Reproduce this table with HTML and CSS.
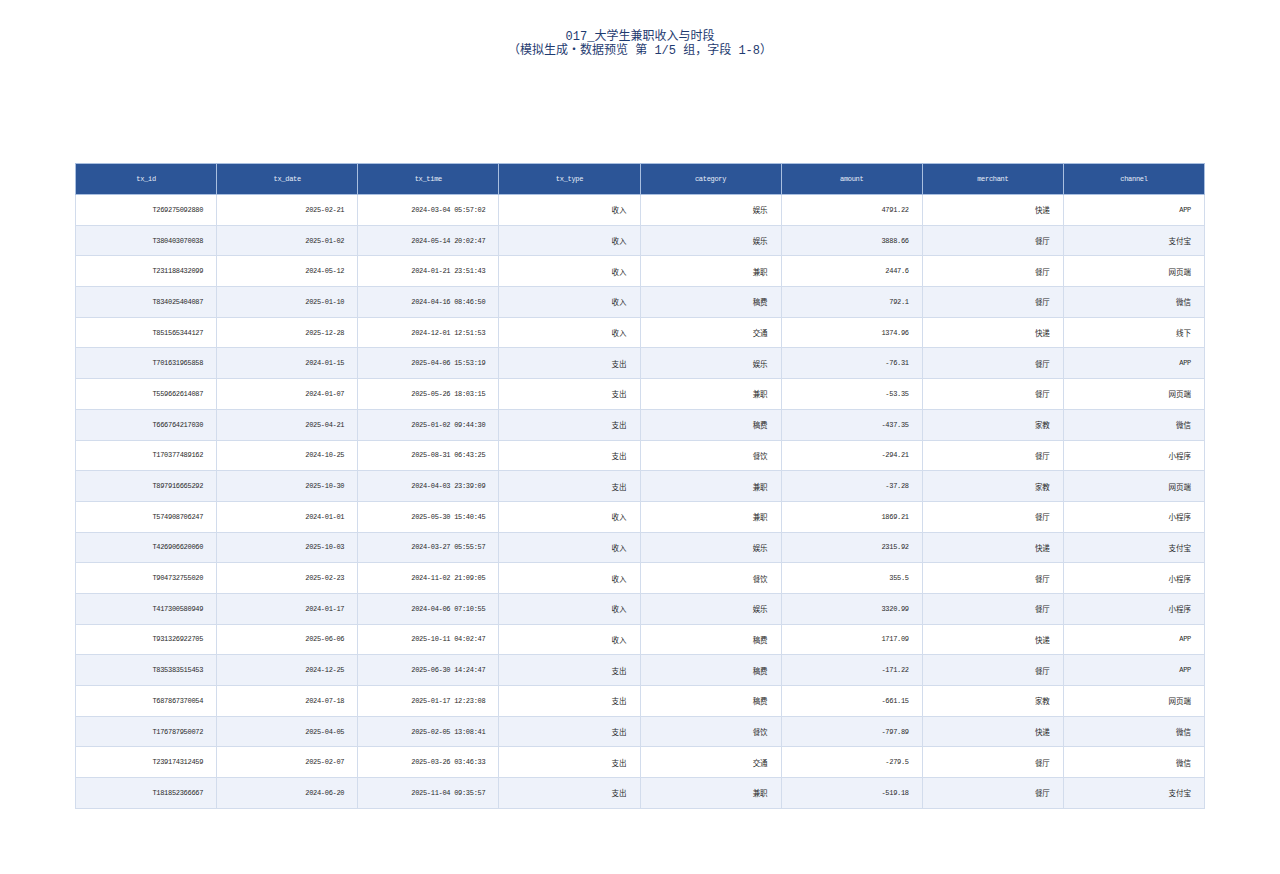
FILE: index.html
```html
<!DOCTYPE html>
<html lang="zh">
<head>
<meta charset="utf-8">
<title>017_大学生兼职收入与时段</title>
<link rel="stylesheet" href="styles.css">
</head>
<body>
<div class="page">
  <header class="title">
    <div>017_大学生兼职收入与时段</div>
    <div>（模拟生成・数据预览 第 1/5 组，字段 1-8）</div>
  </header>
  <table class="grid">
    <thead>
      <tr><th>tx_id</th><th>tx_date</th><th>tx_time</th><th>tx_type</th><th>category</th><th>amount</th><th>merchant</th><th>channel</th></tr>
    </thead>
    <tbody>
      <tr><td>T269275092880</td><td>2025-02-21</td><td>2024-03-04 05:57:02</td><td class="zh">收入</td><td class="zh">娱乐</td><td>4791.22</td><td class="zh">快递</td><td>APP</td></tr>
      <tr><td>T380403070038</td><td>2025-01-02</td><td>2024-05-14 20:02:47</td><td class="zh">收入</td><td class="zh">娱乐</td><td>3888.66</td><td class="zh">餐厅</td><td class="zh">支付宝</td></tr>
      <tr><td>T231188432099</td><td>2024-05-12</td><td>2024-01-21 23:51:43</td><td class="zh">收入</td><td class="zh">兼职</td><td>2447.6</td><td class="zh">餐厅</td><td class="zh">网页端</td></tr>
      <tr><td>T834025404087</td><td>2025-01-10</td><td>2024-04-16 08:46:50</td><td class="zh">收入</td><td class="zh">稿费</td><td>792.1</td><td class="zh">餐厅</td><td class="zh">微信</td></tr>
      <tr><td>T851565344127</td><td>2025-12-28</td><td>2024-12-01 12:51:53</td><td class="zh">收入</td><td class="zh">交通</td><td>1374.96</td><td class="zh">快递</td><td class="zh">线下</td></tr>
      <tr><td>T701631965858</td><td>2024-01-15</td><td>2025-04-06 15:53:19</td><td class="zh">支出</td><td class="zh">娱乐</td><td>-76.31</td><td class="zh">餐厅</td><td>APP</td></tr>
      <tr><td>T559662614087</td><td>2024-01-07</td><td>2025-05-26 18:03:15</td><td class="zh">支出</td><td class="zh">兼职</td><td>-53.35</td><td class="zh">餐厅</td><td class="zh">网页端</td></tr>
      <tr><td>T666764217030</td><td>2025-04-21</td><td>2025-01-02 09:44:30</td><td class="zh">支出</td><td class="zh">稿费</td><td>-437.35</td><td class="zh">家教</td><td class="zh">微信</td></tr>
      <tr><td>T170377489162</td><td>2024-10-25</td><td>2025-08-31 06:43:25</td><td class="zh">支出</td><td class="zh">餐饮</td><td>-294.21</td><td class="zh">餐厅</td><td class="zh">小程序</td></tr>
      <tr><td>T897916665292</td><td>2025-10-30</td><td>2024-04-03 23:39:09</td><td class="zh">支出</td><td class="zh">兼职</td><td>-37.28</td><td class="zh">家教</td><td class="zh">网页端</td></tr>
      <tr><td>T574908706247</td><td>2024-01-01</td><td>2025-05-30 15:40:45</td><td class="zh">收入</td><td class="zh">兼职</td><td>1869.21</td><td class="zh">餐厅</td><td class="zh">小程序</td></tr>
      <tr><td>T426906620060</td><td>2025-10-03</td><td>2024-03-27 05:55:57</td><td class="zh">收入</td><td class="zh">娱乐</td><td>2315.92</td><td class="zh">快递</td><td class="zh">支付宝</td></tr>
      <tr><td>T904732755020</td><td>2025-02-23</td><td>2024-11-02 21:09:05</td><td class="zh">收入</td><td class="zh">餐饮</td><td>355.5</td><td class="zh">餐厅</td><td class="zh">小程序</td></tr>
      <tr><td>T417300580949</td><td>2024-01-17</td><td>2024-04-06 07:10:55</td><td class="zh">收入</td><td class="zh">娱乐</td><td>3320.99</td><td class="zh">餐厅</td><td class="zh">小程序</td></tr>
      <tr><td>T931326922705</td><td>2025-06-06</td><td>2025-10-11 04:02:47</td><td class="zh">收入</td><td class="zh">稿费</td><td>1717.09</td><td class="zh">快递</td><td>APP</td></tr>
      <tr><td>T835383515453</td><td>2024-12-25</td><td>2025-06-30 14:24:47</td><td class="zh">支出</td><td class="zh">稿费</td><td>-171.22</td><td class="zh">餐厅</td><td>APP</td></tr>
      <tr><td>T687867370054</td><td>2024-07-18</td><td>2025-01-17 12:23:08</td><td class="zh">支出</td><td class="zh">稿费</td><td>-661.15</td><td class="zh">家教</td><td class="zh">网页端</td></tr>
      <tr><td>T176787950072</td><td>2025-04-05</td><td>2025-02-05 13:08:41</td><td class="zh">支出</td><td class="zh">餐饮</td><td>-797.89</td><td class="zh">快递</td><td class="zh">微信</td></tr>
      <tr><td>T239174312459</td><td>2025-02-07</td><td>2025-03-26 03:46:33</td><td class="zh">支出</td><td class="zh">交通</td><td>-279.5</td><td class="zh">餐厅</td><td class="zh">微信</td></tr>
      <tr><td>T181852366667</td><td>2024-06-20</td><td>2025-11-04 09:35:57</td><td class="zh">支出</td><td class="zh">兼职</td><td>-519.18</td><td class="zh">餐厅</td><td class="zh">支付宝</td></tr>
    </tbody>
  </table>
</div>
</body>
</html>
```

FILE: styles.css
```css
html, body {
  margin: 0;
  padding: 0;
  background: #ffffff;
}

.page {
  width: 1280px;
  height: 874px;
  padding: 30px 75px 0 75px;
  box-sizing: border-box;
  font-family: "Liberation Mono", "Noto Sans CJK SC", monospace;
}

.title {
  text-align: center;
  color: #1f3b70;
  font-size: 12px;
  line-height: 14px;
  margin-bottom: 105px;
}

.grid {
  width: 1130px;
  border-collapse: collapse;
  table-layout: fixed;
  font-size: 7px;
  letter-spacing: -0.3px;
  color: #2a2a2a;
}

.grid th {
  height: 30px;
  background: #2c5597;
  color: #e8eef8;
  font-weight: normal;
  text-align: center;
  border: 1px solid #a9bfe0;
  padding: 0;
}

.grid td {
  height: 29.7px;
  text-align: right;
  padding: 0 13px 0 0;
  border: 1px solid #d2dcec;
  background: #ffffff;
}

.grid td.zh {
  font-size: 7.5px;
  letter-spacing: 0;
}

.grid tbody tr:nth-child(even) td {
  background: #eef2fa;
}
```
